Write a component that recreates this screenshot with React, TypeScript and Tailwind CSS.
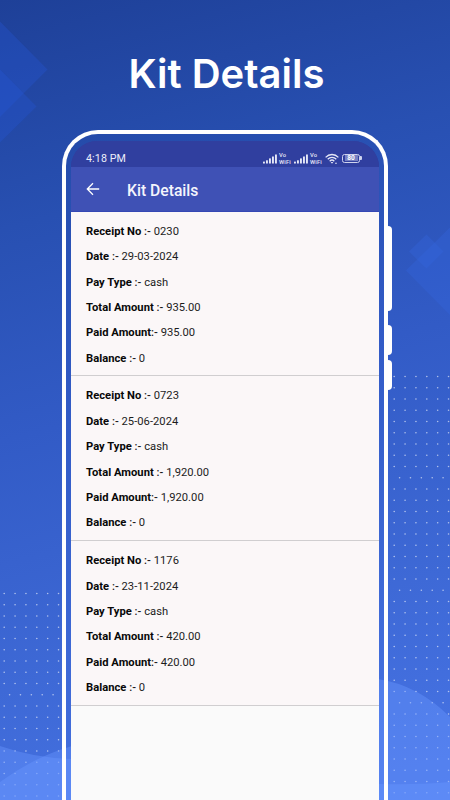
import React from 'react';

interface Receipt {
  receiptNo: string;
  date: string;
  payType: string;
  total: string;
  paid: string;
  balance: string;
}

const receipts: Receipt[] = [
  { receiptNo: '0230', date: '29-03-2024', payType: 'cash', total: '935.00', paid: '935.00', balance: '0' },
  { receiptNo: '0723', date: '25-06-2024', payType: 'cash', total: '1,920.00', paid: '1,920.00', balance: '0' },
  { receiptNo: '1176', date: '23-11-2024', payType: 'cash', total: '420.00', paid: '420.00', balance: '0' },
];

interface DotGridProps {
  x: number;
  y: number;
  rows: number;
}

// Every tenth row is shifted by half a step and has one dot less
function DotGrid({ x, y, rows }: DotGridProps) {
  return (
    <g fill="#fff" fillOpacity={0.6}>
      {[...Array(rows)].map((_, row) => {
        const shifted = row % 10 === 9;
        return [...Array(shifted ? 5 : 6)].map((_, col) => (
          <circle
            key={`${row}-${col}`}
            cx={x + col * 10.87 + (shifted ? 5.4 : 0)}
            cy={y + row * 11.25}
            r={0.8}
          />
        ));
      })}
    </g>
  );
}

function Backdrop() {
  return (
    <svg className="absolute inset-0" width="450" height="800" viewBox="0 0 450 800">
      <g fill="#2657d6" fillOpacity={0.32}>
        <path d="M-48 69.500L0 21.500L47.500 69.500L0 117Z" />
        <path d="M-37 106.500L0 69.500L36.500 106.500L0 142.500Z" />
      </g>
      <g fill="#3566e0" fillOpacity={0.32}>
        <path d="M406 270.500L450 227.500V315Z" />
        <path d="M409 251.500L426.500 234.500L443.500 251.500L426.500 268.500Z" />
      </g>
      <DotGrid x={4.200} y={593.500} rows={19} />
      <DotGrid x={394.200} y={376.500} rows={38} />
      <g fill="#6a95ff" fillOpacity={0.42}>
        <path d="M0 746Q34 758 72 759L380 784Q418 785 450 782V800H0Z" />
        <path d="M0 782Q34 757 72 746L378 679Q418 685 450 717V800H0Z" />
      </g>
    </svg>
  );
}

function SignalIcon() {
  return (
    <svg width="14" height="10" viewBox="0 0 14 10" fill="#e4e6f6">
      <rect x="0" y="7.600" width="1.900" height="1.900" />
      <rect x="3" y="6.300" width="1.900" height="3.200" />
      <rect x="6" y="4.400" width="1.900" height="5.100" />
      <rect x="9" y="2.500" width="1.900" height="7" />
      <rect x="12" y="0.500" width="1.900" height="9" />
    </svg>
  );
}

function VoWifi() {
  return (
    <div className="flex w-[13px] flex-col text-[5.800px] leading-[7px] font-medium tracking-[0.150px] text-[#e4e6f6]">
      <span>Vo</span>
      <span>WiFi</span>
    </div>
  );
}

function StatusBar() {
  return (
    <div className="flex h-[26px] shrink-0 items-center bg-[#303f9f] pt-[9px] pr-[17px] pl-[15px]">
      <span className="flex-1 text-[10.700px] leading-[12px] tracking-[0.100px] text-[#eceefa]">4:18 PM</span>
      <SignalIcon />
      <div className="ml-[2px]"><VoWifi /></div>
      <div className="ml-[2px]"><SignalIcon /></div>
      <div className="ml-[2px]"><VoWifi /></div>
      <svg className="ml-[2px]" width="14" height="12" viewBox="0 0 14 12" fill="none" stroke="#e4e6f6" strokeWidth="1.300">
        <path d="M0.600 4.400C4.200 0.500 9.800 0.500 13.400 4.400" />
        <path d="M2.700 6.300C5.100 3.800 8.900 3.800 11.300 6.300" />
        <path d="M4.700 8.200C6 6.900 8 6.900 9.300 8.200" />
        <path d="M5.700 9H8.300L7 10.700Z" fill="#e4e6f6" stroke="none" />
        <path d="M9.800 10.700L11 9.200L12.200 10.700Z" fill="#e4e6f6" stroke="none" />
      </svg>
      <div className="mb-[1px] ml-[3px] flex items-center">
        <div className="flex h-[9px] w-[18px] items-center justify-center rounded-[2.500px] border border-[#cfd3ee]">
          <span className="flex h-[6px] w-[13px] items-center justify-center bg-[#7680c2] text-[6.500px] leading-[6px] font-bold text-white">80</span>
        </div>
        <div className="h-[4px] w-[2px] rounded-r-[1px] bg-[#cfd3ee]" />
      </div>
    </div>
  );
}

function AppBar() {
  return (
    <div className="flex h-[44.500px] shrink-0 items-center border-b border-[#3547b4] bg-[#3f51b5] pl-[15px]">
      <svg width="14" height="14" viewBox="0 0 14 14" fill="none" stroke="#fff" strokeWidth="1.300">
        <path d="M13.200 7H1.500M7 1.300L1.300 7L7 12.700" />
      </svg>
      <h2 className="ml-[27px] pt-[4px] text-[15.700px] leading-[20px] font-medium text-[#f4f5fc]">Kit Details</h2>
    </div>
  );
}

function Field({ label, value }: { label: string; value: string }) {
  return (
    <p className="h-[25.400px] text-[11.200px] leading-[25.400px] tracking-[0.020px] whitespace-nowrap text-[#1c1c1c]">
      <span className="font-bold text-[#080808]">{label}</span>
      <span className="font-medium">:-</span> {value}
    </p>
  );
}

function ReceiptRow({ receipt }: { receipt: Receipt }) {
  return (
    <div className="h-[164.700px] shrink-0 border-b border-[#d0ced0] bg-[#fbf7f8] pt-[7.300px] pl-[15px]">
      <Field label="Receipt No " value={receipt.receiptNo} />
      <Field label="Date " value={receipt.date} />
      <Field label="Pay Type " value={receipt.payType} />
      <Field label="Total Amount " value={receipt.total} />
      <Field label="Paid Amount" value={receipt.paid} />
      <Field label="Balance " value={receipt.balance} />
    </div>
  );
}

function Phone() {
  return (
    <div className="relative mt-[33px] ml-[62px] flex w-[330px] items-start">
      <div className="h-[721px] w-[326px] rounded-t-[36px] border-4 border-b-0 border-white pt-[7px] pr-[5px] pl-[5px]">
        <div className="flex h-full flex-col overflow-hidden rounded-t-[26px] bg-[linear-gradient(#303f9f_60px,#fafafa_60px)] font-['Roboto',sans-serif]">
          <StatusBar />
          <AppBar />
          {receipts.map((receipt) => (
            <ReceiptRow key={receipt.receiptNo} receipt={receipt} />
          ))}
        </div>
      </div>
      {/* side buttons */}
      <div className="flex flex-col pt-[96px]">
        <div className="h-[85px] w-[4px] rounded-r-[4px] bg-white" />
        <div className="mt-[14px] h-[30px] w-[4px] rounded-r-[4px] bg-white" />
        <div className="mt-[5px] h-[30px] w-[4px] rounded-r-[4px] bg-white" />
      </div>
    </div>
  );
}

export default function App() {
  return (
    <div className="relative h-[800px] w-[450px] overflow-hidden bg-[linear-gradient(165deg,#1e4098_0%,#2850b2_25%,#325bc6_48%,#3e69d6_75%,#4774e6_100%)]">
      <Backdrop />
      <h1 className="relative pt-[51px] text-center font-['Inter',sans-serif] text-[40px] leading-[46px] font-semibold text-white">
        <span className="relative left-[1.500px]">Kit Details</span>
      </h1>
      <Phone />
    </div>
  );
}
